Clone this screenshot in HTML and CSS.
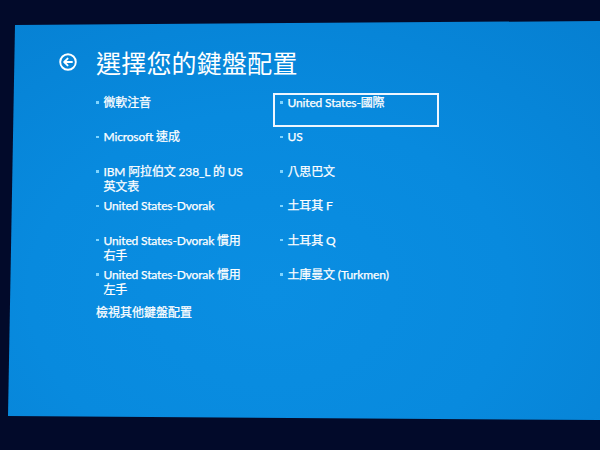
FILE: index.html
```html
<!DOCTYPE html>
<html lang="zh-Hant">
<head>
<meta charset="utf-8">
<title>選擇您的鍵盤配置</title>
<link rel="stylesheet" href="styles.css">
</head>
<body>
<div class="screen">
  <header class="header">
    <svg class="back" viewBox="0 0 18 18" width="18" height="18" aria-hidden="true">
      <circle cx="9" cy="9" r="7.8" fill="none" stroke="#fff" stroke-width="1.9"/>
      <path d="M13 9H5.4M8.6 5.6L5.2 9l3.4 3.4" fill="none" stroke="#fff" stroke-width="1.9" stroke-linecap="round" stroke-linejoin="round"/>
    </svg>
    <h1 class="title">選擇您的鍵盤配置</h1>
  </header>
  <div class="lists">
    <div class="col">
      <div class="item"><span class="dot"></span><span class="label">微軟注音</span></div>
      <div class="item"><span class="dot"></span><span class="label">Microsoft 速成</span></div>
      <div class="item"><span class="dot"></span><span class="label">IBM 阿拉伯文 238_L 的 US<br>英文表</span></div>
      <div class="item"><span class="dot"></span><span class="label">United States-Dvorak</span></div>
      <div class="item"><span class="dot"></span><span class="label">United States-Dvorak 慣用<br>右手</span></div>
      <div class="item"><span class="dot"></span><span class="label">United States-Dvorak 慣用<br>左手</span></div>
      <div class="more">檢視其他鍵盤配置</div>
    </div>
    <div class="col">
      <div class="item selected"><span class="dot"></span><span class="label">United States-國際</span></div>
      <div class="item"><span class="dot"></span><span class="label">US</span></div>
      <div class="item"><span class="dot"></span><span class="label">八思巴文</span></div>
      <div class="item"><span class="dot"></span><span class="label">土耳其 F</span></div>
      <div class="item"><span class="dot"></span><span class="label">土耳其 Q</span></div>
      <div class="item"><span class="dot"></span><span class="label">土庫曼文 (Turkmen)</span></div>
    </div>
  </div>
</div>
</body>
</html>
```
FILE: styles.css
```css
html, body {
  margin: 0;
  padding: 0;
}
body {
  width: 600px;
  height: 450px;
  overflow: hidden;
  background: #020a2a;
  font-family: "Lato", "Noto Sans CJK TC", sans-serif;
  color: #ffffff;
}
.screen {
  box-sizing: border-box;
  width: 600px;
  height: 450px;
  padding: 47px 0 0 59px;
  background:
    radial-gradient(ellipse 80% 80% at 45% 65%, #0a8ee2 0%, #088ade 50%, #0680d2 100%);
  clip-path: polygon(15px 25px, 600px 21px, 600px 420px, 8px 416px);
}
.header {
  display: flex;
  align-items: center;
  gap: 19px;
  height: 30px;
}
.back {
  display: block;
  flex: none;
}
.title {
  margin: 0;
  font-family: "Noto Sans CJK TC", sans-serif;
  font-weight: 400;
  font-size: 25px;
  line-height: 30px;
  color: #ffffff;
  letter-spacing: 0.2px;
}
.lists {
  display: flex;
  gap: 18px;
  margin: 16px 0 0 30px;
}
.col {
  display: flex;
  flex-direction: column;
  width: 166px;
}
.item {
  box-sizing: border-box;
  display: flex;
  align-items: flex-start;
  gap: 5px;
  min-height: 34.4px;
  padding: 0 5px;
  border: 2px solid transparent;
  font-size: 12px;
  line-height: 15.2px;
  -webkit-text-stroke: 0.25px #ffffff;
  letter-spacing: -0.15px;
}
.item.selected {
  border-color: #eef6ff;
}
.dot {
  flex: none;
  width: 2.5px;
  height: 2.5px;
  margin-top: 6.4px;
  background: #7fd4ff;
}
.label {
  white-space: nowrap;
}
.more {
  margin-top: 6px;
  padding-left: 7px;
  font-size: 12px;
  line-height: 15.2px;
  -webkit-text-stroke: 0.25px #ffffff;
}
```
